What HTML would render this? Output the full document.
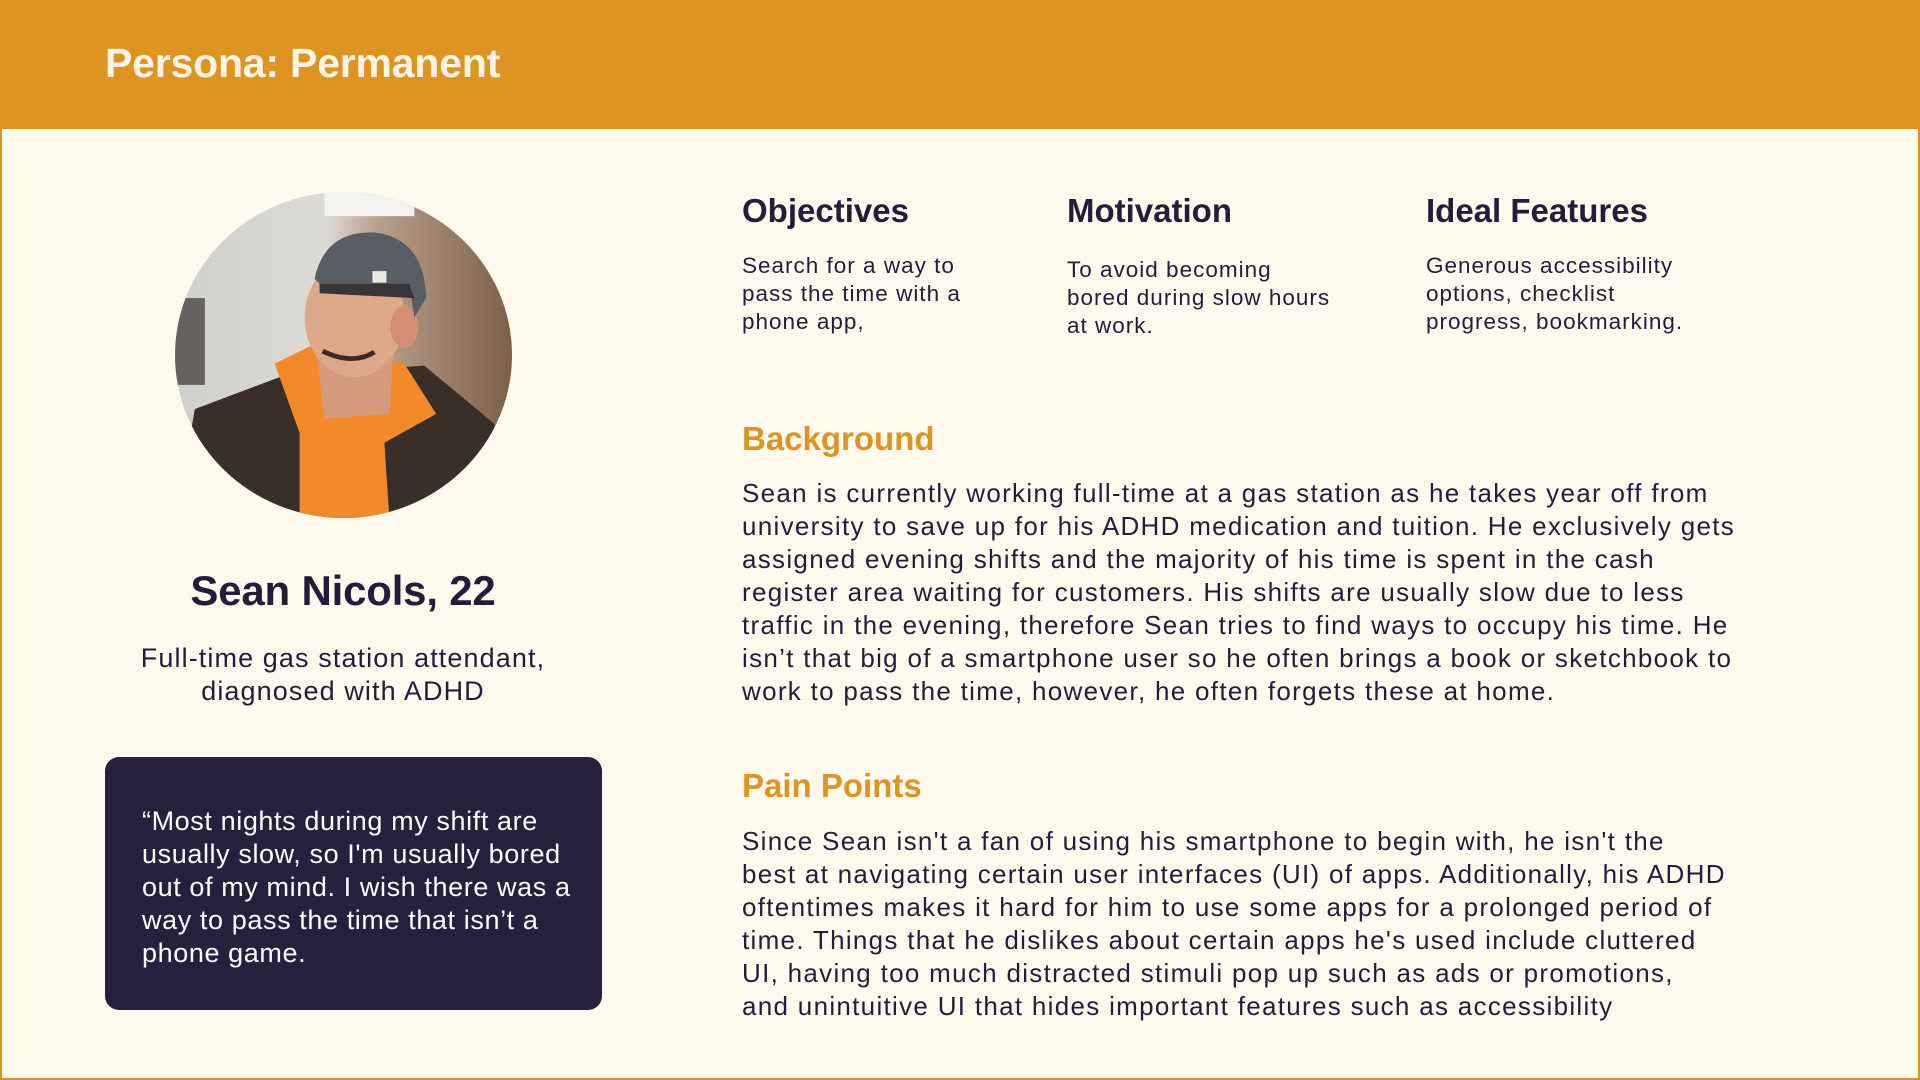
<!DOCTYPE html>
<html><head><meta charset="utf-8"><style>
*{margin:0;padding:0;box-sizing:border-box}
body{width:1920px;height:1080px;background:#FEFAEE;position:relative;overflow:hidden;font-family:"Liberation Sans",sans-serif;color:#231D3B}
.hdr{position:absolute;left:0;top:0;width:1920px;height:129px;background:#DE9420}
.hdr h1{position:absolute;left:105px;top:40px;font-size:41px;font-weight:bold;color:#FFF4E6;letter-spacing:-0.2px}
.bl{position:absolute;left:0;top:129px;width:2px;height:951px;background:#DE9420}
.br{position:absolute;right:0;top:129px;width:2px;height:951px;background:#DE9420}
.bb{position:absolute;left:0;bottom:0;width:1920px;height:2px;background:#DE9420}
.abs{position:absolute;white-space:nowrap}
.h2{font-size:33px;font-weight:bold}
.small{font-size:22.5px;line-height:28px;letter-spacing:1px;color:#231D3B}
.orange{color:#DE9420}
.body{font-size:26px;line-height:33px;letter-spacing:1.3px;color:#231D3B}
.quote{position:absolute;left:105px;top:757px;width:497px;height:253px;background:#261F3D;border-radius:14px;color:#fff;font-size:27px;letter-spacing:0.6px;line-height:33px;padding:48px 0 0 37px;white-space:nowrap}
</style></head><body>
<div class="hdr"><h1>Persona: Permanent</h1></div>
<div class="bl"></div><div class="br"></div><div class="bb"></div>

<svg class="abs" style="left:175px;top:192px" width="337" height="326" viewBox="0 0 338 338" preserveAspectRatio="none">
<defs><clipPath id="c"><circle cx="169" cy="169" r="169"/></clipPath>
<linearGradient id="bg" x1="0" x2="1"><stop offset="0" stop-color="#CFCFCB"/><stop offset="0.45" stop-color="#DCDBD6"/><stop offset="0.6" stop-color="#B9A08C"/><stop offset="1" stop-color="#7C6048"/></linearGradient></defs>
<g clip-path="url(#c)">
<rect width="338" height="338" fill="url(#bg)"/>
<rect x="0" y="110" width="30" height="90" fill="#3A3330" opacity="0.7"/>
<rect x="150" y="0" width="90" height="25" fill="#F2F2EE"/>
<path d="M20 225 L110 190 L250 180 L320 240 L338 338 L0 338 Z" fill="#3A2E28"/>
<path d="M100 178 L135 160 L230 178 L262 230 L210 260 L215 338 L125 338 L125 250 Z" fill="#F28A2A"/>
<path d="M140 150 L220 150 L215 230 L150 235 Z" fill="#D39A7E"/>
<ellipse cx="180" cy="130" rx="50" ry="62" fill="#DDA88A"/>
<ellipse cx="230" cy="140" rx="14" ry="22" fill="#D48E74"/>
<path d="M140 90 Q150 40 200 42 Q250 48 252 110 L240 130 L235 95 L145 95 Z" fill="#595E66"/>
<path d="M145 95 L235 95 L240 110 L145 105 Z" fill="#3A3638"/>
<rect x="198" y="82" width="14" height="12" fill="#E8E8E2"/>
<path d="M148 165 Q178 180 200 166" stroke="#3A2A22" stroke-width="5" fill="none"/>
</g></svg>

<div class="abs" style="left:0;width:686px;top:567px;text-align:center;font-size:42px;font-weight:bold;letter-spacing:-0.2px">Sean Nicols, 22</div>
<div class="abs" style="left:0;width:686px;top:642px;text-align:center;font-size:27px;letter-spacing:1.1px;line-height:33px">Full-time gas station attendant,<br>diagnosed with ADHD</div>

<div class="quote">“Most nights during my shift are<br>usually slow, so I'm usually bored<br>out of my mind. I wish there was a<br>way to pass the time that isn’t a<br>phone game.</div>

<div class="abs h2" style="left:742px;top:192px">Objectives</div>
<div class="abs small" style="left:742px;top:252px">Search for a way to<br>pass the time with a<br>phone app,</div>
<div class="abs h2" style="left:1067px;top:192px">Motivation</div>
<div class="abs small" style="left:1067px;top:256px">To avoid becoming<br>bored during slow hours<br>at work.</div>
<div class="abs h2" style="left:1426px;top:192px">Ideal Features</div>
<div class="abs small" style="left:1426px;top:252px">Generous accessibility<br>options, checklist<br>progress, bookmarking.</div>

<div class="abs h2 orange" style="left:742px;top:420px">Background</div>
<div class="abs body" style="left:742px;top:477px">Sean is currently working full-time at a gas station as he takes year off from<br>university to save up for his ADHD medication and tuition. He exclusively gets<br>assigned evening shifts and the majority of his time is spent in the cash<br>register area waiting for customers. His shifts are usually slow due to less<br>traffic in the evening, therefore Sean tries to find ways to occupy his time. He<br>isn’t that big of a smartphone user so he often brings a book or sketchbook to<br>work to pass the time, however, he often forgets these at home.</div>

<div class="abs h2 orange" style="left:742px;top:767px">Pain Points</div>
<div class="abs body" style="left:742px;top:825px">Since Sean isn't a fan of using his smartphone to begin with, he isn't the<br>best at navigating certain user interfaces (UI) of apps. Additionally, his ADHD<br>oftentimes makes it hard for him to use some apps for a prolonged period of<br>time. Things that he dislikes about certain apps he's used include cluttered<br>UI, having too much distracted stimuli pop up such as ads or promotions,<br>and unintuitive UI that hides important features such as accessibility</div>
</body></html>
